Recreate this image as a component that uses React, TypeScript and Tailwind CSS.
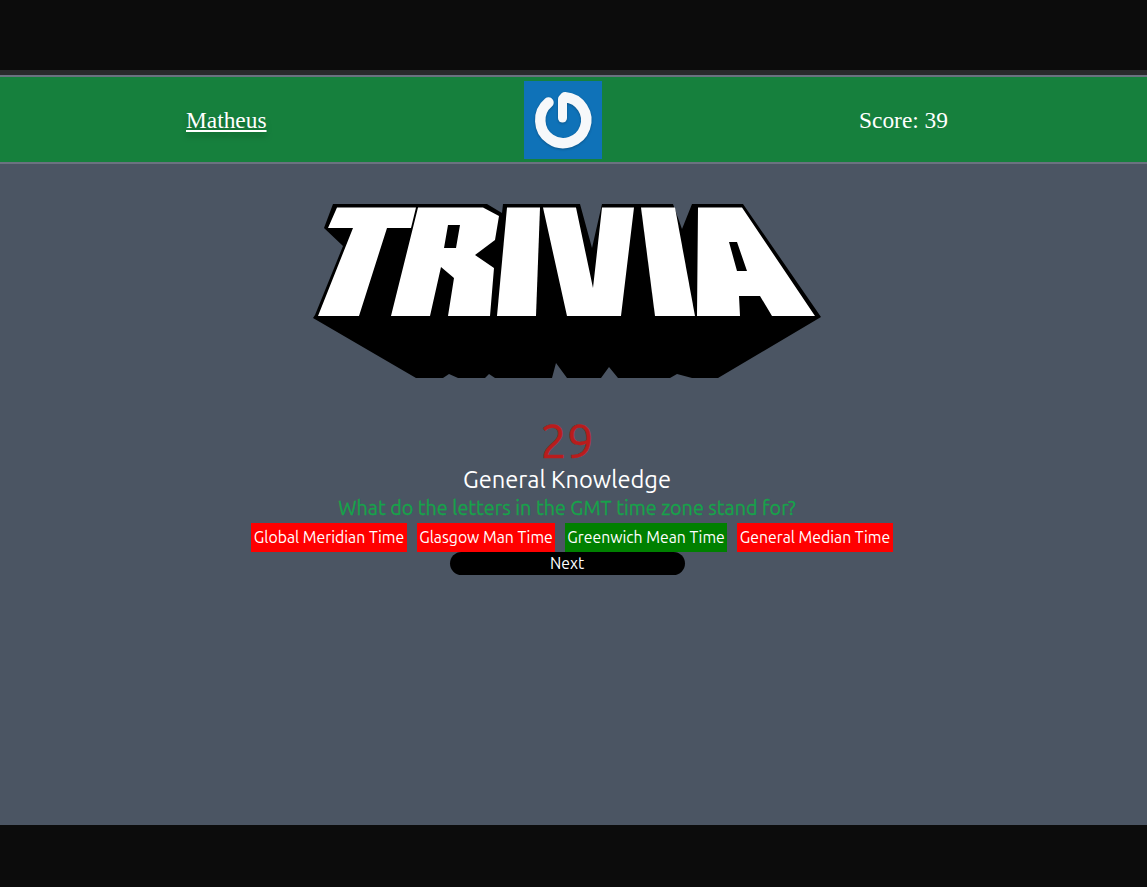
const answers = [
  { label: 'Global Meridian Time', color: 'bg-[#ff0000]', width: 'w-[156px]' },
  { label: 'Glasgow Man Time', color: 'bg-[#ff0000]', width: 'w-[138px]' },
  { label: 'Greenwich Mean Time', color: 'bg-[#008000]', width: 'w-[162px]' },
  { label: 'General Median Time', color: 'bg-[#ff0000]', width: 'w-[156px]' },
];

function PowerLogo() {
  return (
    <div className="w-[78px] h-[78px] ml-px bg-[#0f72b8]">
      <svg width="78" height="78" viewBox="0 0 78 78" className="[filter:drop-shadow(0_1px_1px_rgba(0,0,0,0.25))]">
        <path
          d="M24.5 21.5 A23 23 0 1 0 41 16.2"
          fill="none"
          stroke="#f6f8fa"
          strokeWidth="10.5"
          strokeLinecap="round"
        />
        <path d="M38.5 18 L38.5 37" fill="none" stroke="#f6f8fa" strokeWidth="9" strokeLinecap="round" />
      </svg>
    </div>
  );
}

function TriviaLogo() {
  return (
    <svg width="509" height="176" viewBox="313 203 509 176">
      {/* extruded shadow and outline, in page coordinates */}
      <path
        d="M333 204 L487 204 L502 213 L503 204 L580 204 L592 248 L602 204 L673 204 L682 229 L692 204 L743 204 L821 317 L718 378 L692 378 L677 374 L670 378 L618 378 L609 367 L601 378 L567 378 L556 363 L552 378 L495 378 L489 374 L485 378 L458 378 L449 374 L443 378 L416 378 L313 318 L315 315 L343 246 L324 228 Z"
        fill="#000"
      />
      <g fill="#fff">
        <path d="M337 207.5 L416 207.5 L411 228 L387 228 L359 316 L318 316 L353 228 L328 228 Z" />
        <path
          fillRule="evenodd"
          d="M418 207.5 L483 207.5 L499 216 L495 240 L475 255 L494 268 L490 316 L448 316 L454 278 L441 267 L430 316 L391 316 Z M448 225 L460 225 L456 248 L444 248 Z"
        />
        <path d="M507 207.5 L540 207.5 L536 316 L497 316 Z" />
        <path d="M543 207.5 L576 207.5 L593 288 L602 207.5 L634 207.5 L621 316 L567 316 Z" />
        <path d="M641 207.5 L675 207.5 L695 316 L655 316 Z" />
        <path
          fillRule="evenodd"
          d="M698 207.5 L742 207.5 L815 316 L772 316 L760 296 L739 296 L740 316 L697 316 Z M729 242 L737 242 L747 271 L737 271 Z"
        />
      </g>
    </svg>
  );
}

export default function App() {
  return (
    <div className="min-h-[887px] flex flex-col bg-[#0c0c0c] font-['Ubuntu','Noto_Sans',sans-serif]">
      <div className="h-[70px] bg-[#0c0c0c]" />
      <div className="h-[5px] bg-[#2a2a2c]" />
      <header className="h-[89px] bg-[#16803d] border-y-2 border-[#6b7280] flex items-center justify-between pl-[186px] pr-[199px] font-['Liberation_Serif',serif] text-white text-[23.4px]">
        <a className="mt-[2px] underline [text-shadow:0_4px_6px_rgba(0,0,0,0.25)]">Matheus</a>
        <PowerLogo />
        <div className="mt-[2px]">Score: 39</div>
      </header>
      <main className="h-[661px] bg-[#4b5563] flex flex-col items-center pt-[39px] pr-[13px]">
        <TriviaLogo />
        <div className="mt-[38px] text-[47.4px] leading-[48px] text-[#b91c1c] [-webkit-text-stroke:0.5px_#b91c1c]">29</div>
        <div className="text-[23.7px] leading-[29px] text-white">General Knowledge</div>
        <div className="text-[19.75px] leading-[28px] text-[#16a34a] [-webkit-text-stroke:0.3px_#16a34a]">What do the letters in the GMT time zone stand for?</div>
        <div className="flex gap-[10px] mt-px ml-[10px]">
          {answers.map((a) => (
            <button key={a.label} className={`${a.color} ${a.width} h-[29px] text-white text-[15.8px] text-center whitespace-nowrap`}>
              {a.label}
            </button>
          ))}
        </div>
        <button className="w-[235px] h-[23px] rounded-full bg-black text-white text-[15.8px] leading-[23px]">Next</button>
      </main>
      <div className="h-[62px] bg-[#0c0c0c]" />
    </div>
  );
}
